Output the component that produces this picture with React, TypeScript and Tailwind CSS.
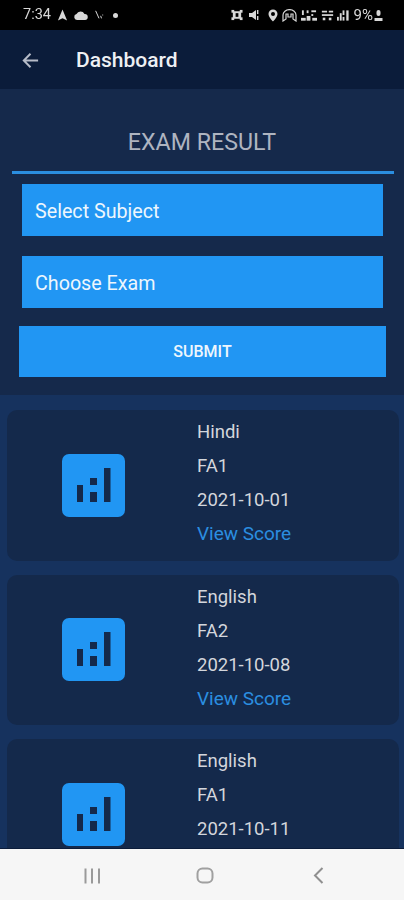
import React from "react";

function BarsIcon() {
  return (
    <div className="flex h-[63px] w-[63px] shrink-0 items-center justify-center rounded-[7px] bg-[#2196f3]">
      <svg width="63" height="63" viewBox="0 0 63 63" fill="#14294b">
        <rect x="15" y="31" width="6" height="17" />
        <rect x="28" y="24" width="7" height="7" />
        <rect x="28" y="38" width="7" height="10" />
        <rect x="42" y="14" width="6.500" height="34" />
      </svg>
    </div>
  );
}

function ResultCard({ subject, exam, date, score = true }: { subject: string; exam: string; date: string; score?: boolean }) {
  return (
    <div className="flex h-[150.5px] shrink-0 rounded-[10px] bg-[#14294b]">
      <div className="flex w-[190px] shrink-0 items-center pl-[55px]">
        <BarsIcon />
      </div>
      <div className="flex flex-col pt-[5px] text-[18.500px] leading-[34px] text-[#d3d6dc]">
        <span>{subject}</span>
        <span>{exam}</span>
        <span>{date}</span>
        {score && <span className="text-[19px] text-[#2b8ee0]">View Score</span>}
      </div>
    </div>
  );
}

function StatusIcons() {
  return (
    <div className="flex items-center gap-[4px] text-[#d8d8d8]">
      <svg width="12" height="12" viewBox="0 0 13 12" fill="currentColor">
        <rect x="2" y="2" width="9" height="8" rx="1" />
        <rect x="0.500" y="0.500" width="3" height="3" />
        <rect x="9.500" y="0.500" width="3" height="3" />
        <rect x="0.500" y="8.500" width="3" height="3" />
        <rect x="9.500" y="8.500" width="3" height="3" />
        <rect x="5" y="4" width="3" height="4" fill="#000" />
      </svg>
      <svg className="ml-[2px]" width="11" height="12" viewBox="0 0 11 12" fill="currentColor">
        <path d="M0 4h3l4-3v10L3 8H0z" />
        <rect x="8" y="1" width="1.400" height="4" />
        <rect x="8" y="7" width="1.400" height="4" />
      </svg>
      <svg className="ml-[4px]" width="10" height="13" viewBox="0 0 10 13">
        <path d="M5 0.500a4.500 4.500 0 0 1 4.500 4.500C9.500 8 5 12.500 5 12.500S.5 8 .5 5A4.500 4.500 0 0 1 5 .5z" fill="currentColor" />
        <circle cx="5" cy="5" r="2" fill="#000" />
      </svg>
      <svg width="15" height="13" viewBox="0 0 15 13" fill="none" stroke="currentColor" strokeWidth="1.200">
        <path d="M1 12V6a6 5 0 0 1 13 0v6l-3-2V5H9v3H6V5H4v5z" />
      </svg>
      <svg width="16" height="13" viewBox="0 0 17 13" fill="currentColor">
        <rect x="1" y="1" width="2" height="5" />
        <rect x="6" y="1" width="2" height="3" />
        <rect x="11" y="1" width="5" height="2" />
        <rect x="11" y="5" width="2" height="2" />
        <rect x="0" y="9" width="5" height="3" />
        <rect x="6" y="7" width="4" height="5" />
        <rect x="12" y="9" width="5" height="3" />
      </svg>
      <svg width="13" height="13" viewBox="0 0 15 13" fill="currentColor">
        <rect x="1" y="1" width="6" height="2" />
        <rect x="9" y="1" width="5" height="2" />
        <rect x="1" y="5" width="13" height="2" />
        <rect x="2" y="9" width="3" height="3" />
        <rect x="9" y="9" width="3" height="3" />
      </svg>
      <svg className="ml-[-1px]" width="13" height="13" viewBox="0 0 14 13" fill="currentColor">
        <rect x="0" y="8" width="2" height="4" />
        <rect x="3" y="4" width="2" height="8" />
        <rect x="6" y="1" width="2" height="5" />
        <rect x="6" y="8" width="2" height="4" />
        <rect x="10" y="1" width="2.500" height="11" />
      </svg>
      <div className="flex items-center gap-[1px]">
        <span className="text-[15px] leading-none">9%</span>
        <svg width="9" height="13" viewBox="0 0 9 13" fill="currentColor">
          <rect x="2.500" y="1" width="4" height="6" rx="2" />
          <rect x="0.500" y="9" width="8" height="3" />
        </svg>
      </div>
    </div>
  );
}

export default function App() {
  return (
    <div className="flex h-[900px] w-[404px] flex-col overflow-hidden bg-[#16325e] font-['Roboto',sans-serif]">
      <div className="flex h-[30px] shrink-0 items-center justify-between bg-black pl-[23px] pr-[21px] blur-[0.5px]">
        <div className="flex items-center gap-[6px] text-[#d8d8d8]">
          <span className="text-[14.500px] leading-none">7:34</span>
          <svg width="11" height="12" viewBox="0 0 12 12" fill="currentColor"><path d="M6 0l5 12-5-2.500L1 12z" /></svg>
          <svg width="14" height="9" viewBox="0 0 14 9" fill="currentColor"><path d="M3 9a3 3 0 0 1-.500-5.900A4.500 4.500 0 0 1 10.500 3 3 3 0 0 1 11 9z" /></svg>
          <svg width="10" height="12" viewBox="0 0 12 12" fill="none" stroke="currentColor" strokeWidth="1.200"><path d="M2 1l4 9M8 7l1 3M10 6h1" /></svg>
          <span className="ml-[3px] h-[5px] w-[5px] rounded-full bg-[#d8d8d8]" />
        </div>
        <StatusIcons />
      </div>

      <div className="flex h-[59px] shrink-0 items-center bg-[#0b1c3a] pl-[22px] pt-[2px]">
        <svg width="17" height="17" viewBox="0 0 19 19" fill="none" stroke="#b7bcc8" strokeWidth="2.200">
          <path d="M18 9.500H2M9.500 2L2 9.500 9.500 17" />
        </svg>
        <span className="ml-[37px] text-[21px] font-medium text-[#eef0f3]">Dashboard</span>
      </div>

      <div className="flex h-[306px] shrink-0 flex-col bg-[#15294b]">
        <h1 className="mt-[38px] text-center text-[23.200px] font-normal leading-[30px] text-[#aeb4c0]">EXAM RESULT</h1>
        <div className="ml-[12px] mr-[10px] mt-[14px] h-[3px] bg-[#2b8ee0]" />
        <div className="ml-[22px] mr-[21px] mt-[10px] flex h-[52px] items-center bg-[#2196f3] pl-[13px] pt-[3px] text-[19.700px] text-[#eef6fd]">Select Subject</div>
        <div className="ml-[22px] mr-[21px] mt-[20px] flex h-[52px] items-center bg-[#2196f3] pl-[13px] pt-[3px] text-[19.700px] text-[#eef6fd]">Choose Exam</div>
        <div className="ml-[19px] mr-[18px] mt-[18px] flex h-[51px] items-center justify-center bg-[#2196f3] pt-[1px] text-[16px] font-medium text-[#eef6fd]">SUBMIT</div>
      </div>

      <div className="flex min-h-0 flex-1 flex-col gap-[14px] overflow-hidden pl-[7px] pr-[5px] pt-[15px]">
        <ResultCard subject="Hindi" exam="FA1" date="2021-10-01" />
        <ResultCard subject="English" exam="FA2" date="2021-10-08" />
        <ResultCard subject="English" exam="FA1" date="2021-10-11" score={false} />
      </div>

      <div className="flex h-[52px] shrink-0 items-center border-t border-[#0b1c3a] bg-[#f6f6f6] pt-[2px]">
        <div className="flex w-full items-center justify-between pl-[84px] pr-[80px]">
          <svg width="17" height="16" viewBox="0 0 17 16" fill="#9a9a9a">
            <rect x="0.500" y="0.500" width="2" height="15" />
            <rect x="7" y="0.500" width="2" height="15" />
            <rect x="14" y="0.500" width="2" height="15" />
          </svg>
          <svg className="mr-[5px]" width="18" height="17" viewBox="0 0 18 17" fill="none" stroke="#a0a0a0" strokeWidth="2">
            <rect x="1.500" y="1.500" width="15" height="14" rx="5" />
          </svg>
          <svg width="11" height="17" viewBox="0 0 11 17" fill="none" stroke="#8f8f8f" strokeWidth="2">
            <path d="M9.500 1L2 8.500l7.500 7.500" />
          </svg>
        </div>
      </div>
    </div>
  );
}
